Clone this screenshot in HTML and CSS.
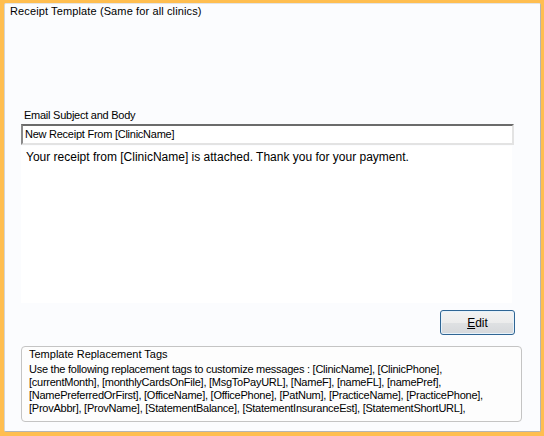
FILE: index.html
```html
<!DOCTYPE html>
<html>
<head>
<meta charset="utf-8">
<link rel="stylesheet" href="styles.css">
</head>
<body>
<div class="panel">
  <div class="title">Receipt Template (Same for all clinics)</div>
  <div class="content">
    <div class="label">Email Subject and Body</div>
    <div class="subject">New Receipt From [ClinicName]</div>
    <div class="bodytext">Your receipt from [ClinicName] is attached. Thank you for your payment.</div>
    <button class="edit"><span class="ul">E</span>dit</button>
    <div class="tags">
      <div class="tags-title">Template Replacement Tags</div>
      <div class="tags-text">Use the following replacement tags to customize messages : [ClinicName], [ClinicPhone],<br>[currentMonth], [monthlyCardsOnFile], [MsgToPayURL], [NameF], [nameFL], [namePref],<br>[NamePreferredOrFirst], [OfficeName], [OfficePhone], [PatNum], [PracticeName], [PracticePhone],<br>[ProvAbbr], [ProvName], [StatementBalance], [StatementInsuranceEst], [StatementShortURL],</div>
    </div>
  </div>
</div>
</body>
</html>
```

FILE: styles.css
```css
html, body {
  margin: 0;
  padding: 0;
}
body {
  background: #ffbe50;
  width: 544px;
  height: 436px;
  box-sizing: border-box;
  padding: 3px 3px 4px 4px;
  font-family: "Liberation Sans", Arial, sans-serif;
  font-size: 11px;
  color: #000;
  overflow: hidden;
}
.panel {
  width: 537px;
  height: 429px;
  box-sizing: border-box;
  background: #fbfcfe;
  border-style: solid;
  border-width: 1px;
  border-color: #e4e4e4 #b4b4b4 #b4b4b4 #d4d4d4;
  border-radius: 2px;
  display: flex;
  flex-direction: column;
}
.title {
  margin: 1px 0 0 5px;
  line-height: 13px;
  height: 13px;
  white-space: nowrap;
  letter-spacing: 0.12px;
}
.content {
  padding-left: 16px;
  margin-top: 91px;
  display: flex;
  flex-direction: column;
  align-items: flex-start;
}
.label {
  margin-left: 3px;
  line-height: 13px;
  height: 13px;
  letter-spacing: -0.25px;
}
.subject {
  margin-top: 2px;
  width: 493px;
  height: 21px;
  box-sizing: border-box;
  background: #fff;
  border-style: solid;
  border-width: 2px;
  border-color: #6b6b6b #e3e3e3 #e3e3e3 #8a8a8a;
  padding: 2px 0 0 2px;
  line-height: 13px;
  white-space: nowrap;
  letter-spacing: -0.25px;
}
.bodytext {
  margin-top: 1px;
  width: 491px;
  height: 157px;
  box-sizing: border-box;
  background: #ffffff;
  padding: 4px 0 0 5px;
  font-size: 12px;
  line-height: 14px;
  white-space: nowrap;
}
.edit {
  margin: 7px 0 0 419px;
  width: 75px;
  height: 25px;
  box-sizing: border-box;
  border: 1px solid #2f6594;
  border-radius: 3px;
  background: linear-gradient(to bottom, #f3f3f3 0%, #ececec 50%, #dfe1e3 51%, #d6d8db 100%);
  font-family: "Liberation Sans", Arial, sans-serif;
  font-size: 12px;
  color: #000;
  padding: 0;
  line-height: 14px;
  box-shadow: inset 0 0 0 1px #e6f2fb;
}
.ul {
  text-decoration: underline;
}
.tags {
  margin-top: 11px;
  width: 501px;
  height: 76px;
  box-sizing: border-box;
  border: 1px solid #c4c4c4;
  border-radius: 4px;
  background: #fdfdfd;
  padding: 1px 0 0 7px;
}
.tags-title {
  line-height: 13px;
  height: 13px;
  white-space: nowrap;
}
.tags-text {
  margin-top: 2px;
  line-height: 13px;
  white-space: nowrap;
  letter-spacing: -0.25px;
}
```
